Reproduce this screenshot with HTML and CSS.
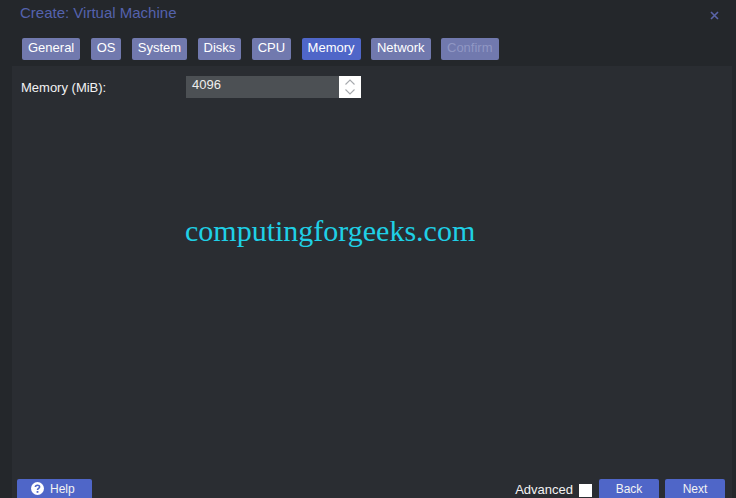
FILE: index.html
```html
<!DOCTYPE html>
<html lang="en">
<head>
    <meta charset="UTF-8">
    <title>Create: Virtual Machine</title>
    <link rel="stylesheet" href="styles.css">
</head>
<body>

<div class="window">
    <!--Title and tabs-->
    <div class="header">
        <div class="titleRow">
            <span class="title">Create: Virtual Machine</span>
            <span class="close">
                <svg width="9" height="9" viewBox="0 0 9 9">
                    <path d="M1 1 L8 8 M8 1 L1 8" stroke="#5a64a8" stroke-width="1.6" fill="none"/>
                </svg>
            </span>
        </div>
        <div class="tabs">
            <span class="tab">General</span>
            <span class="tab">OS</span>
            <span class="tab">System</span>
            <span class="tab">Disks</span>
            <span class="tab">CPU</span>
            <span class="tab active">Memory</span>
            <span class="tab">Network</span>
            <span class="tab disabled">Confirm</span>
        </div>
    </div>

    <!--Form area-->
    <div class="content">
        <div class="formRow">
            <label class="fieldLabel">Memory (MiB):</label>
            <div class="spinner">
                <span class="spinValue">4096</span>
                <span class="spinButtons">
                    <svg width="12" height="20" viewBox="0 0 12 20">
                        <path d="M1.5 7.5 L6 3 L10.5 7.5 M1.5 12.5 L6 17 L10.5 12.5" stroke="#a6a9ad" stroke-width="1.1" fill="none"/>
                    </svg>
                </span>
            </div>
        </div>
        <div class="watermark">computingforgeeks.com</div>
    </div>

    <!--Buttons at the bottom, cut by the window edge-->
    <div class="footer">
        <button class="btn helpBtn">
            <svg width="13" height="13" viewBox="0 0 13 13">
                <circle cx="6.5" cy="6.5" r="6.5" fill="#ffffff"/>
                <path d="M4.4 5.1 C4.4 2.6 8.6 2.6 8.6 5 C8.6 6.4 6.5 6.4 6.5 8" stroke="#4f66c8" stroke-width="1.6" fill="none"/>
                <rect x="5.6" y="9" width="1.8" height="1.8" fill="#4f66c8"/>
            </svg>
            Help
        </button>
        <div class="footerRight">
            <span class="advanced">Advanced</span>
            <span class="checkbox"></span>
            <button class="btn navBtn">Back</button>
            <button class="btn navBtn">Next</button>
        </div>
    </div>
</div>

</body>
</html>
```

FILE: styles.css
```css
/*CSS for whole page*/
html, body {
    margin: 0;
    height: 100%;
    overflow: hidden;
}

body {
    background-color: #24272b;
    font-family: "Liberation Sans", Arial, sans-serif;
    font-size: 13px;
}

.window {
    width: 736px;
    height: 498px;
    display: flex;
    flex-direction: column;
    overflow: hidden;
}

/*CSS for title and tabs*/
.header {
    height: 66px;
    flex-shrink: 0;
    background-color: #24272b;
}

.titleRow {
    display: flex;
    justify-content: space-between;
    align-items: center;
    height: 25px;
    padding: 0 17px 0 20px;
}

.title {
    color: #5462ad;
    font-size: 15px;
}

.close {
    display: flex;
    padding-top: 6px;
}

.tabs {
    display: flex;
    gap: 10.4px;
    padding: 13px 0 0 22px;
}

.tab {
    height: 22px;
    line-height: 20px;
    padding: 0 6px;
    border-radius: 2px;
    background-color: #7179ae;
    color: #ffffff;
}

.active {
    background-color: #4f66c8;
}

.disabled {
    color: #9097c4;
}

/*CSS for the form area*/
.content {
    flex: 1;
    margin: 0 4px 0 12px;
    background-color: #2a2d32;
}

.formRow {
    display: flex;
    align-items: center;
    padding: 10px 0 0 9px;
}

.fieldLabel {
    width: 165px;
    color: #f2f2f2;
}

.spinner {
    display: flex;
    width: 175px;
    height: 22px;
    background-color: #4c5054;
}

.spinValue {
    flex: 1;
    padding-left: 6px;
    line-height: 18px;
    color: #eeeeee;
}

.spinButtons {
    display: flex;
    align-items: center;
    justify-content: center;
    width: 22px;
    background-color: #ffffff;
}

.watermark {
    margin: 116px 0 0 173px;
    font-family: "Liberation Serif", "Times New Roman", serif;
    font-size: 30px;
    line-height: 34px;
    color: #1fd0e6;
}

/*CSS for the buttons at the bottom*/
.footer {
    display: flex;
    justify-content: space-between;
    align-items: flex-start;
    height: 19px;
    flex-shrink: 0;
    margin: -40px 11px 0 17px;
    padding-top: 21px;
}

.btn {
    border: none;
    border-radius: 2px;
    background-color: #4f66c8;
    color: #f2f2f2;
    font-family: inherit;
    font-size: 12px;
    height: 22px;
    padding: 0 0 3px 0;
}

.helpBtn {
    display: flex;
    align-items: center;
    gap: 6px;
    width: 75px;
    padding-left: 14px;
}

.footerRight {
    display: flex;
    align-items: flex-start;
}

.advanced {
    margin-top: 3px;
    color: #f2f2f2;
}

.checkbox {
    width: 13px;
    height: 13px;
    margin: 5px 7px 0 6px;
    background-color: #ffffff;
}

.navBtn {
    width: 60px;
    margin-right: 6px;
}

.navBtn:last-child {
    margin-right: 0;
}
```
